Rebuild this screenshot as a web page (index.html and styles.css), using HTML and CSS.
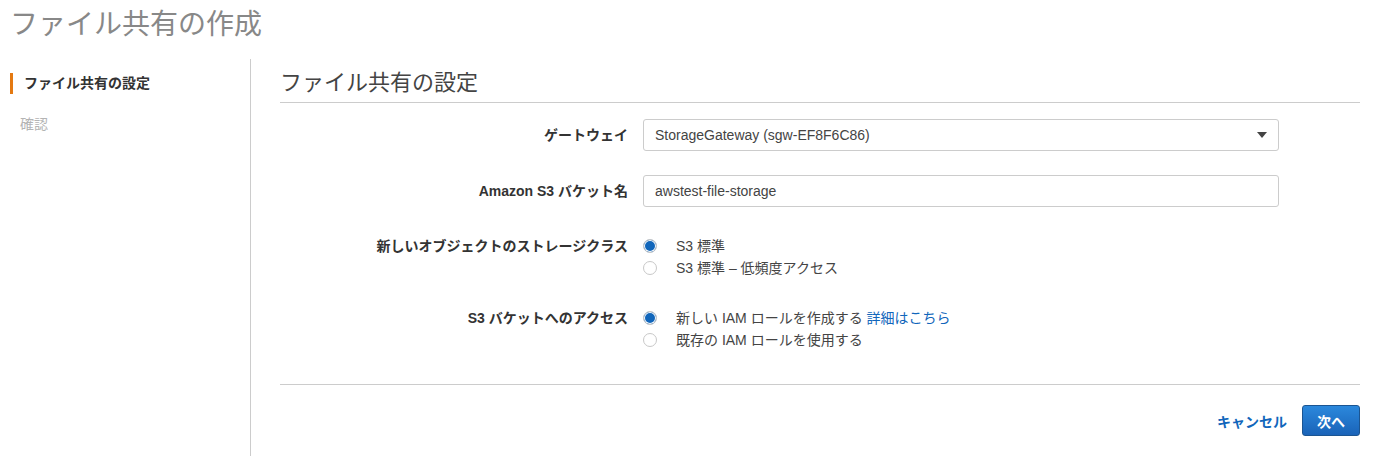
FILE: index.html
```html
<!DOCTYPE html>
<html lang="ja">
<head>
<meta charset="utf-8">
<title>ファイル共有の作成</title>
<link rel="stylesheet" href="styles.css">
</head>
<body>
<h1 class="page-title">ファイル共有の作成</h1>
<div class="layout">
  <nav class="steps">
    <div class="step step-active">ファイル共有の設定</div>
    <div class="step step-disabled">確認</div>
  </nav>
  <main class="content">
    <h2 class="section-title">ファイル共有の設定</h2>
    <div class="form">
      <div class="label label-field">ゲートウェイ</div>
      <div class="select">
        <span class="select-value">StorageGateway (sgw-EF8F6C86)</span>
        <span class="caret"></span>
      </div>

      <div class="label label-field">Amazon S3 バケット名</div>
      <div class="input">awstest-file-storage</div>

      <div class="label label-radio">新しいオブジェクトのストレージクラス</div>
      <div class="radio-group">
        <div class="radio-row"><span class="radio radio-checked"></span><span>S3 標準</span></div>
        <div class="radio-row"><span class="radio"></span><span>S3 標準 – 低頻度アクセス</span></div>
      </div>

      <div class="label label-radio">S3 バケットへのアクセス</div>
      <div class="radio-group">
        <div class="radio-row"><span class="radio radio-checked"></span><span>新しい IAM ロールを作成する <a class="link" href="#">詳細はこちら</a></span></div>
        <div class="radio-row"><span class="radio"></span><span>既存の IAM ロールを使用する</span></div>
      </div>
    </div>
    <div class="footer">
      <a class="cancel" href="#">キャンセル</a>
      <button class="btn-primary" type="button">次へ</button>
    </div>
  </main>
</div>
</body>
</html>
```

FILE: styles.css
```css
html, body {
  margin: 0;
  padding: 0;
  background: #fff;
}
body {
  font-family: "Liberation Sans", "Noto Sans CJK JP", sans-serif;
  font-size: 14px;
  color: #444;
  height: 456px;
  overflow: hidden;
}
.page-title {
  margin: 0;
  padding: 7px 10px 16px;
  font-size: 28px;
  line-height: 36px;
  font-weight: normal;
  color: #888;
}
.layout {
  display: flex;
  height: 397px;
}
.steps {
  width: 250px;
  border-right: 1px solid #ccc;
  box-sizing: content-box;
  padding-top: 14px;
  display: flex;
  flex-direction: column;
  gap: 20px;
}
.step {
  line-height: 21px;
  height: 21px;
  font-size: 14px;
}
.step-active {
  margin-left: 10px;
  border-left: 3px solid #e47911;
  padding-left: 11px;
  font-weight: bold;
  color: #333;
}
.step-disabled {
  padding-left: 20px;
  color: #b4b4b4;
}
.content {
  flex: 1;
  padding: 9px 35px 0 29px;
}
.section-title {
  margin: 0;
  font-size: 22px;
  line-height: 30px;
  font-weight: normal;
  color: #444;
  padding-bottom: 4px;
  border-bottom: 1px solid #ccc;
}
.form {
  display: grid;
  grid-template-columns: 348px 636px;
  column-gap: 15px;
  row-gap: 24px;
  padding-top: 16px;
  padding-bottom: 33px;
  border-bottom: 1px solid #ccc;
}
.label {
  text-align: right;
  font-weight: bold;
  color: #333;
  white-space: nowrap;
}
.label-field {
  line-height: 32px;
}
.label-radio {
  padding-top: 4px;
  line-height: 22px;
}
.select, .input {
  height: 32px;
  box-sizing: border-box;
  border: 1px solid #ccc;
  border-radius: 3px;
  padding: 0 11px;
  display: flex;
  align-items: center;
  justify-content: space-between;
  color: #444;
  font-size: 14px;
}
.caret {
  width: 0;
  height: 0;
  border-left: 5px solid transparent;
  border-right: 5px solid transparent;
  border-top: 6px solid #444;
}
.radio-group {
  padding-top: 4px;
  display: flex;
  flex-direction: column;
}
.radio-row {
  display: flex;
  align-items: center;
  line-height: 22px;
  height: 22px;
  color: #444;
}
.radio {
  width: 14px;
  height: 14px;
  box-sizing: border-box;
  border-radius: 50%;
  border: 1px solid #c8c8c8;
  background: #fff;
  margin-right: 19px;
  flex: none;
}
.radio-checked {
  background: #1166bb;
  box-shadow: inset 0 0 0 1px #fff;
}
.link {
  color: #1166bb;
  text-decoration: none;
}
.footer {
  display: flex;
  justify-content: flex-end;
  align-items: center;
  gap: 15px;
  padding-top: 20px;
}
.cancel {
  color: #1166bb;
  font-weight: bold;
  text-decoration: none;
  font-size: 14px;
}
.btn-primary {
  height: 31px;
  width: 58px;
  border: 1px solid #1b5592;
  border-radius: 3px;
  background: linear-gradient(#2b88dc, #1a63b8);
  color: #fff;
  font-family: "Liberation Sans", "Noto Sans CJK JP", sans-serif;
  font-weight: bold;
  font-size: 14px;
  padding: 0;
}
```
